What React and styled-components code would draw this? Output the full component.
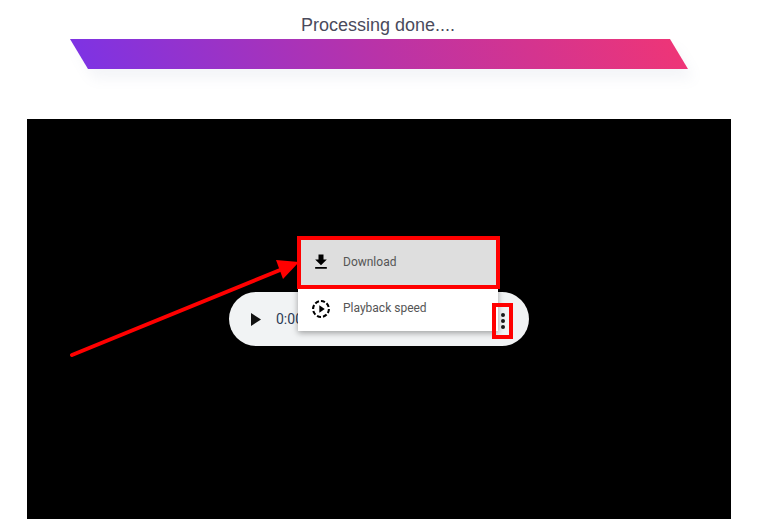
import React from "react"
import styled, { createGlobalStyle } from "styled-components"

const Global = createGlobalStyle`
  html, body {
    margin: 0;
    padding: 0;
    background: #fff;
  }
`

const Page = styled.div`
  width: 769px;
  height: 531px;
  overflow: hidden;
  display: flex;
  flex-direction: column;
  align-items: center;
  padding: 15px 11px 0 0;
  box-sizing: border-box;
`

const Status = styled.div`
  font-family: "Liberation Sans", Arial, sans-serif;
  font-size: 18px;
  line-height: 21px;
  color: #4a4a5c;
  margin-right: 2px;
`

const ProgressBar = styled.div`
  width: 600px;
  height: 30px;
  margin-top: 3px;
  transform: skewX(31deg);
  background: linear-gradient(100deg, #7e33e3 0%, #b933a8 50%, #ee3577 100%);
  box-shadow: 0 10px 12px rgba(120, 130, 160, 0.08);
`

const Stage = styled.div`
  position: relative;
  width: 704px;
  height: 400px;
  margin-top: 50px;
  background: #000;
  display: flex;
  align-items: center;
  justify-content: center;
`

const Player = styled.div`
  position: relative;
  width: 300px;
  height: 54px;
  border-radius: 27px;
  background: #f1f3f4;
  display: flex;
  align-items: center;
  box-sizing: border-box;
  padding-left: 22px;
`

const PlayIcon = styled.svg`
  width: 10px;
  height: 13px;
  fill: #111;
  flex: none;
`

const Time = styled.span`
  font-family: Roboto, Arial, sans-serif;
  font-size: 14px;
  color: #2c3a55;
  margin-left: 15px;
`

const Kebab = styled.div`
  position: absolute;
  left: 263px;
  top: 11px;
  width: 21px;
  height: 36px;
  box-sizing: border-box;
  border: 4px solid #f00;
  display: flex;
  flex-direction: column;
  align-items: center;
  justify-content: center;
  gap: 2px;
  z-index: 1;
`

const Dot = styled.span`
  width: 4px;
  height: 4px;
  border-radius: 50%;
  background: #1a1a1a;
`

const Menu = styled.div`
  position: absolute;
  left: 69px;
  bottom: 15px;
  width: 200px;
  background: #fff;
  box-shadow: 0 2px 6px rgba(0, 0, 0, 0.35);
  display: flex;
  flex-direction: column;
`

const MenuItem = styled.div`
  position: relative;
  display: flex;
  align-items: center;
  height: ${p => p.$h}px;
  padding-left: 13px;
  gap: 12px;
  font-family: Roboto, Arial, sans-serif;
  font-size: 12px;
  color: #555;
  box-sizing: border-box;
  ${p => p.$active && `
    background: #dedede;
    &::after {
      content: "";
      position: absolute;
      inset: -2px -2px -3px -1px;
      border: 4px solid #f00;
    }
  `}
`

const ItemIcon = styled.svg`
  width: 20px;
  height: 20px;
  flex: none;
`

const Label = styled.span`
  position: relative;
  top: ${p => p.$top || 0}px;
`

const Arrow = styled.svg`
  position: absolute;
  left: 0;
  top: 0;
  width: 704px;
  height: 400px;
  pointer-events: none;
  z-index: 2;
`

export default function App() {
  return (
    <>
      <Global />
      <Page>
        <Status>Processing done....</Status>
        <ProgressBar />
        <Stage>
          <Player>
            <PlayIcon viewBox="0 0 10 13"><path d="M0 0 L10 6.5 L0 13 Z" /></PlayIcon>
            <Time>0:00</Time>
            <Kebab><Dot /><Dot /><Dot /></Kebab>
            <Menu>
              <MenuItem $active $h={48}>
                <ItemIcon viewBox="0 0 24 24"><path fill="#000" d="M19 9h-4V3H9v6H5l7 7 7-7zM5 18v2h14v-2H5z" /></ItemIcon>
                <Label>Download</Label>
              </MenuItem>
              <MenuItem $h={45}>
                <ItemIcon viewBox="0 0 24 24">
                  <circle cx="12" cy="12" r="9.5" fill="none" stroke="#000" strokeWidth="2.5" strokeDasharray="5 2.4" />
                  <path fill="#000" d="M10 7.5l6.5 4.5-6.5 4.5z" />
                </ItemIcon>
                <Label $top={-1}>Playback speed</Label>
              </MenuItem>
            </Menu>
          </Player>
          <Arrow viewBox="0 0 704 400">
            <line x1="45" y1="236" x2="258" y2="149" stroke="#f00" strokeWidth="4" strokeLinecap="round" />
            <path fill="#f00" d="M272 143 L249 141 L256 160 Z" />
          </Arrow>
        </Stage>
      </Page>
    </>
  )
}
